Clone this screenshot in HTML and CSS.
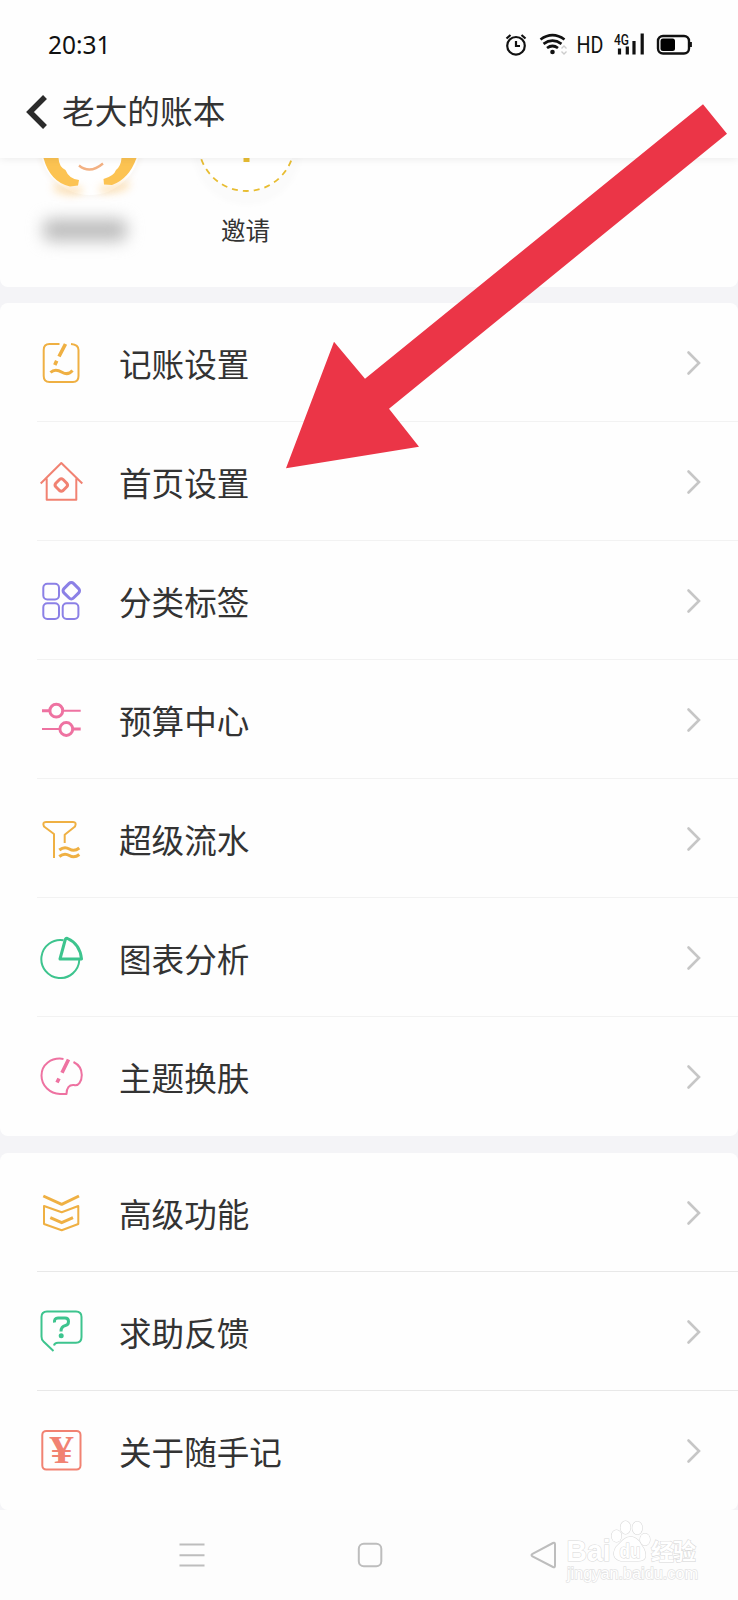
FILE: index.html
```html
<!DOCTYPE html>
<html lang="zh-CN">
<head>
<meta charset="utf-8">
<title>老大的账本</title>
<link rel="stylesheet" href="styles.css">
</head>
<body>
<div class="screen">
  <header class="header">
    <div class="status">
      <span class="time">20:31</span>
      <svg class="status-icons" width="200" height="32" viewBox="0 0 200 32" fill="none" stroke="#111">
        <circle cx="16" cy="16.8" r="8.8" stroke-width="2.200"/>
        <path d="M16 12v5h4M6.500 9.500l4-3.500M25.500 9.500l-4-3.500" stroke-width="2.200"/>
        <path d="M40.500 10.500Q52.500 1.800 64.500 10.500M43.500 14.800Q52.500 8.500 61.500 14.800M47 19Q52.500 15 58 19" stroke-width="2.700"/>
        <circle cx="52.500" cy="23" r="2.300" fill="#111" stroke="none"/>
        <path d="M61.500 19.500l2.500-2.500 2.500 2.500M61.500 22.500l2.500 2.500 2.500-2.500" stroke="#ccc" stroke-width="1.300"/>
        <text class="hd" x="76.500" y="24" textLength="27" lengthAdjust="spacingAndGlyphs">HD</text>
        <text class="net" x="114" y="15.500" textLength="15" lengthAdjust="spacingAndGlyphs">4G</text>
        <path d="M119.500 19.500v6M127.300 17.500v8M134 12v13.500M142.200 4.500v21" stroke-width="3.200"/>
        <rect x="158" y="7" width="31" height="17.500" rx="5" stroke-width="2.400"/>
        <rect x="160.500" y="9.500" width="14.500" height="12.500" rx="2.500" fill="#000" stroke="none"/>
        <path d="M190.800 13v5" stroke-width="2.200"/>
      </svg>
    </div>
    <div class="titlebar">
      <svg class="back" width="24" height="36" viewBox="0 0 24 36"><path d="M20 3 5 18l15 15" fill="none" stroke="#2b2b2b" stroke-width="5.500"/></svg>
      <h1 class="title">老大的账本</h1>
    </div>
  </header>

  <main class="content">
    <section class="card members">
      <div class="member">
        <svg class="member-art" width="120" height="60" viewBox="0 0 120 60">
          <defs>
            <filter id="glow" x="-50%" y="-100%" width="200%" height="300%"><feGaussianBlur stdDeviation="4"/></filter>
            <filter id="halo"><feGaussianBlur stdDeviation="2"/></filter>
          </defs>
          <circle cx="60" cy="-13" r="53" fill="#faf8f5" filter="url(#halo)"/>
          <circle cx="60" cy="-13" r="50" fill="#fff"/>
          <path d="M24 25q12 6 28 4l0 6q-16 4-28-3zM70 28q14 2 30-6l-2 8q-12 6-28 4z" fill="#fbc878" opacity=".6" filter="url(#glow)"/>
          <path d="M13.500 0Q20 24 40 28.500L48 27.500 49 22Q39 21 35.500 12 29 9 28.500 0zM106.500 0Q99 21 82 27L74 26.500 73.500 21Q84 18 86 12 91 8 91.500 0z" fill="#fcc352"/>
          <path d="M49 7.500q11 9 24-2" fill="none" stroke="#f3b183" stroke-width="2.300"/>
        </svg>
        <span class="masked-name"></span>
      </div>
      <div class="member">
        <svg class="member-art" width="120" height="60" viewBox="0 0 120 60">
          <circle cx="60" cy="-7" r="54" fill="#fbfbfb" filter="url(#halo)"/>
          <circle cx="59.500" cy="-15" r="48" fill="#fff" stroke="#e8bd32" stroke-width="1.800" stroke-dasharray="6 5" stroke-dashoffset="4"/>
          <path d="M59.500 0v4" stroke="#e8bd32" stroke-width="6"/>
        </svg>
        <span class="invite">邀请</span>
      </div>
    </section>

    <section class="card">
      <div class="row">
        <svg class="icon amber" viewBox="0 0 44 44"><path d="M20.500 4H10.500Q4.700 4 4.700 10V36Q4.700 42 10.500 42H34Q39.500 42 39.500 36V10Q39.500 4.500 32 4"/><path class="pen" d="M26.500 4 20 16.500M17.700 20.700 15.800 25"/><path class="bold" d="M11.500 32.500C16 28 21 31 23 32.200 27 34.500 31 33.500 33.500 30.500"/></svg>
        <span class="label">记账设置</span><svg class="chevron" viewBox="0 0 16 26"><path d="M2.500 2.500l10.500 10.500L2.500 23.500"/></svg>
      </div>
      <div class="row">
        <svg class="icon coral" viewBox="0 0 44 44"><path d="M1.700 24.500 22.300 4 43.300 24.500M7.700 19.500V40.700H37.300V19.500"/><path class="bold" d="M20.500 20.500q1.800-1.600 3.600 0l3.700 3.700q1.500 1.800 0 3.600l-3.700 3.700q-1.800 1.500-3.600 0l-3.700-3.700q-1.500-1.800 0-3.600z"/></svg>
        <span class="label">首页设置</span><svg class="chevron" viewBox="0 0 16 26"><path d="M2.500 2.500l10.500 10.500L2.500 23.500"/></svg>
      </div>
      <div class="row">
        <svg class="icon violet" viewBox="0 0 44 44"><rect x="4.300" y="5.700" width="15.700" height="15.700" rx="4"/><rect x="4.300" y="25.300" width="15.700" height="15.700" rx="4"/><rect x="23.700" y="25.300" width="15.700" height="15.700" rx="4"/><rect class="bold" x="25.600" y="6" width="13.400" height="13.400" rx="3" transform="rotate(45 32.300 12.700)"/></svg>
        <span class="label">分类标签</span><svg class="chevron" viewBox="0 0 16 26"><path d="M2.500 2.500l10.500 10.500L2.500 23.500"/></svg>
      </div>
      <div class="row">
        <svg class="icon pink" viewBox="0 0 44 44"><path d="M24.300 13.700H41.700M3 32H20.500"/><path class="bold" d="M3 13.700H10.500M34 32H41.700"/><circle class="bold" cx="17.300" cy="13.700" r="6.400"/><circle class="bold" cx="27.300" cy="32" r="6.400"/></svg>
        <span class="label">预算中心</span><svg class="chevron" viewBox="0 0 16 26"><path d="M2.500 2.500l10.500 10.500L2.500 23.500"/></svg>
      </div>
      <div class="row">
        <svg class="icon amber" viewBox="0 0 44 44"><path d="M15 42V18L5 10.500Q3 6 7 6H34Q38 6 36 10.500L25.700 18.700V27"/><path class="bold" d="M20.300 34q5-4 10-1t10-1M20.300 40.500q5-4 10-1t10-1"/></svg>
        <span class="label">超级流水</span><svg class="chevron" viewBox="0 0 16 26"><path d="M2.500 2.500l10.500 10.500L2.500 23.500"/></svg>
      </div>
      <div class="row">
        <svg class="icon green" viewBox="0 0 44 44"><path d="M24.500 5.300A19 19 0 1 0 40.300 25"/><path class="bold" d="M21 24 26.300 4.500Q27 3 28.500 3.500 41 9 42.500 24z"/></svg>
        <span class="label">图表分析</span><svg class="chevron" viewBox="0 0 16 26"><path d="M2.500 2.500l10.500 10.500L2.500 23.500"/></svg>
      </div>
      <div class="row">
        <svg class="icon pink" viewBox="0 0 44 44"><path d="M24.500 4.900C12 3 2.500 11 2.500 21.500 2.500 32 11 39.500 21 40H27.500C27.500 34 30 30.500 35 31 39.500 32.500 42.800 27 42.800 21 42.800 15 39.500 10.500 34.500 8"/><path class="pen" d="M29.500 5.500 23 18.700M20 24.500 18 28.500"/></svg>
        <span class="label">主题换肤</span><svg class="chevron" viewBox="0 0 16 26"><path d="M2.500 2.500l10.500 10.500L2.500 23.500"/></svg>
      </div>
    </section>

    <section class="card">
      <div class="row strong">
        <svg class="icon amber" viewBox="0 0 44 44"><path d="M5 16 22.700 22.300 39.300 16V34L22.700 40.300 5 34z"/><path class="bold" d="M4.300 6 22.700 14.300 40 6M11.300 27.700 22.700 32.700 34 27.700"/></svg>
        <span class="label">高级功能</span><svg class="chevron" viewBox="0 0 16 26"><path d="M2.500 2.500l10.500 10.500L2.500 23.500"/></svg>
      </div>
      <div class="row strong">
        <svg class="icon green" viewBox="0 0 44 44"><path d="M14.500 42 4.500 32.500Q2.500 31 2.500 27.500V8Q2.500 2.500 8 2.500H37Q42.500 2.500 42.500 8V28Q42.500 33.700 37 33.700H19Q15.500 33.700 15 36.500"/><path class="bold" d="M15.500 13.500Q15 9 19 9H26Q29.500 9 29.500 12.500 29.500 16 26.500 16.500 22 17.500 22 22.500"/><circle class="dot" cx="22.200" cy="26.800" r="2.500"/></svg>
        <span class="label">求助反馈</span><svg class="chevron" viewBox="0 0 16 26"><path d="M2.500 2.500l10.500 10.500L2.500 23.500"/></svg>
      </div>
      <div class="row">
        <svg class="icon coral" viewBox="0 0 44 44"><rect x="3.300" y="2.900" width="38.200" height="38.700" rx="4"/><text class="yen" x="10.500" y="34.500" textLength="24" lengthAdjust="spacingAndGlyphs">¥</text></svg>
        <span class="label">关于随手记</span><svg class="chevron" viewBox="0 0 16 26"><path d="M2.500 2.500l10.500 10.500L2.500 23.500"/></svg>
      </div>
    </section>
  </main>

  <nav class="navbar">
    <svg class="nav-icon" viewBox="0 0 30 30"><path d="M2.500 4.500h25M2.500 15.300h25M2.500 25.500h25"/></svg>
    <svg class="nav-icon" viewBox="0 0 30 30"><rect x="3.800" y="3.800" width="22.500" height="22.500" rx="5"/></svg>
    <svg class="nav-icon" viewBox="0 0 30 30"><path d="M3.500 13.800 24 3Q26 2 26 4.500V25.500Q26 28 24 27L3.500 16.500Q1.500 15 3.500 13.800z"/></svg>
  </nav>

  <svg class="watermark" width="146" height="72" viewBox="0 0 146 72">
    <text class="wm-brand" x="6.500" y="41" textLength="44" lengthAdjust="spacingAndGlyphs">Bai</text>
    <g class="wm-paw">
      <ellipse cx="56.500" cy="16" rx="5" ry="6"/><ellipse cx="65.500" cy="7.500" rx="5" ry="6.500"/><ellipse cx="77.300" cy="8" rx="5" ry="6.500"/><ellipse cx="85" cy="19.500" rx="5" ry="6"/>
      <path d="M63 20Q71 13 79 21L84 29Q89 41 78 41H61Q50 38 56 27z"/>
    </g>
    <text class="wm-du" x="59.500" y="38" textLength="21" lengthAdjust="spacingAndGlyphs">du</text>
    <text class="wm-cn" x="91" y="40" textLength="45">经验</text>
    <text class="wm-url" x="7" y="59" textLength="131" lengthAdjust="spacingAndGlyphs">jingyan.baidu.com</text>
  </svg>

  <svg class="arrow" width="442" height="365" viewBox="286 104 442 365"><path d="M703 104.300 727 133.700 389 408.700 419 446.700 286 468.300 334 341.700 365 378.700z" fill="#eb3547"/></svg>
</div>
</body>
</html>
```

FILE: styles.css
```css
* { box-sizing: border-box; }

body {
  margin: 0;
  background: #f4f4f7;
  color: #333;
  font-family: "Noto Sans", "Noto Sans CJK SC", sans-serif;
}

svg { display: block; flex: none; }

.screen {
  position: relative;
  width: 738px;
  height: 1600px;
  overflow: hidden;
  display: flex;
  flex-direction: column;
}

.header {
  position: relative;
  z-index: 1;
  height: 158px;
  flex: none;
  background: #fefefe;
  box-shadow: 0 1px 8px rgba(0, 0, 0, .08);
}

.status {
  display: flex;
  justify-content: space-between;
  align-items: center;
  height: 60px;
  padding: 30px 38px 0 48px;
}

.time {
  color: #111;
  font-size: 24.5px;
  line-height: 30px;
}

.hd { font: 23px Roboto, sans-serif; fill: #111; stroke: none; }
.net { font: 500 15px Roboto, sans-serif; fill: #111; stroke: none; }

.titlebar {
  display: flex;
  align-items: center;
  gap: 13px;
  height: 60px;
  margin-top: 22px;
  padding-left: 25px;
}

.title {
  margin: -4px 0 0;
  font: 400 32.7px/48px "Noto Sans CJK SC", sans-serif;
}

.content {
  display: flex;
  flex-direction: column;
  gap: 17px;
}

.card {
  background: #fefefe;
  border-radius: 8px;
}

.members {
  display: flex;
  gap: 37px;
  height: 129px;
  margin-bottom: -1px;
  padding-left: 30px;
  border-radius: 0 0 8px 8px;
}

.member {
  display: flex;
  flex-direction: column;
  align-items: center;
  width: 120px;
}

.masked-name {
  width: 84px;
  height: 22px;
  margin-top: 1px;
  margin-right: 10px;
  background: #bdbdbd;
  border-radius: 8px;
  filter: blur(8px);
}

.invite {
  margin: -1px 3px 0 0;
  font: 24.5px/26px "Noto Sans CJK SC", sans-serif;
}

.row {
  position: relative;
  display: flex;
  align-items: center;
  height: 119px;
  padding: 0 35px 1px 39px;
}

.row:not(:last-child)::after {
  content: "";
  position: absolute;
  left: 37px;
  right: 0;
  bottom: 0;
  height: 1px;
  background: #f2f2f2;
}

.row.strong:not(:last-child)::after { background: #e8e8e8; }

.icon {
  width: 44px;
  height: 44px;
  fill: none;
  stroke: currentColor;
  stroke-width: 2;
  stroke-linejoin: round;
}

.bold { stroke-width: 3; }
.pen { stroke-width: 3.6; }
.dot { fill: currentColor; stroke: none; }
.amber { color: #efb043; }
.coral { color: #f18272; }
.violet { color: #8b80e6; }
.pink { color: #ee72a1; }
.green { color: #3dc48e; }
.yen { font: bold 39px "Liberation Serif", serif; fill: currentColor; stroke: none; }

.label {
  flex: 1;
  padding: 1px 0 0 36px;
  font: 32.6px/48px "Noto Sans CJK SC", sans-serif;
}

.chevron {
  width: 16px;
  height: 26px;
  margin: 1px 1px 0 0;
  fill: none;
  stroke: #c6c6c6;
  stroke-width: 2.6;
  stroke-linecap: round;
}

.navbar {
  display: flex;
  justify-content: space-between;
  height: 90px;
  padding: 30px 179px 0 177px;
  background: #fdfdfd;
}

.nav-icon {
  width: 30px;
  height: 30px;
  fill: none;
  stroke: #bdbdbd;
  stroke-width: 2;
}

.nav-icon:nth-child(2) { margin-left: 3px; }

.watermark {
  position: absolute;
  left: 560px;
  top: 1520px;
  fill: #fff;
  stroke: #d9d9d9;
  stroke-width: 1.1;
  paint-order: stroke;
}

.wm-brand { font: bold 30px "Liberation Sans", sans-serif; }
.wm-du { font: bold 20px "Liberation Sans", sans-serif; }
.wm-cn { font: bold 23px "Noto Sans CJK SC", sans-serif; }
.wm-url { font: 16px "Liberation Sans", sans-serif; stroke: #e2e2e2; stroke-width: 1.3; }

.arrow {
  position: absolute;
  left: 286px;
  top: 104px;
  z-index: 2;
}
```
